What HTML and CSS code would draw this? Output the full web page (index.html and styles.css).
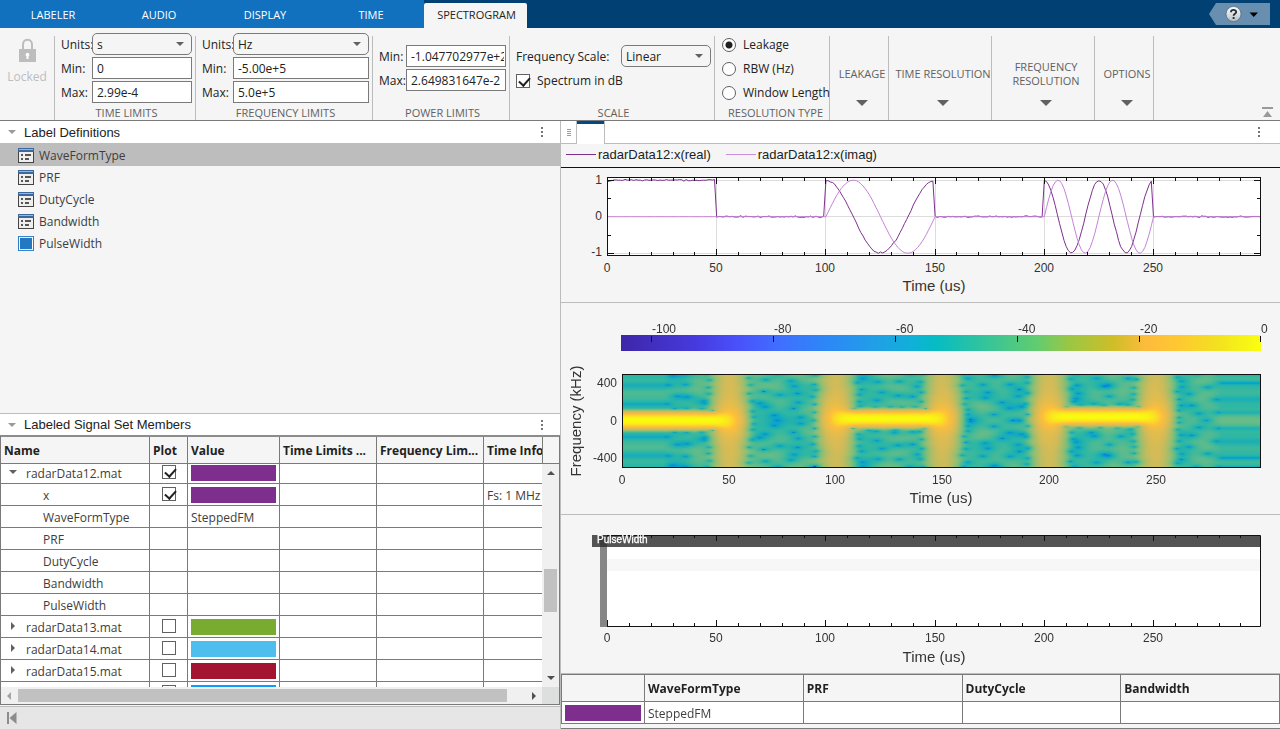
FILE: index.html
```html
<!DOCTYPE html>
<html lang="en">
<head>
<meta charset="utf-8">
<title>Signal Labeler</title>
<link rel="stylesheet" href="styles.css">
</head>
<body>
<header class="tabbar">
  <nav class="tabs">
    <button class="tab">LABELER</button>
    <button class="tab">AUDIO</button>
    <button class="tab">DISPLAY</button>
    <button class="tab">TIME</button>
    <button class="tab tab-active">SPECTROGRAM</button>
  </nav>
  <button class="help" aria-label="Help">
    <svg width="61" height="22" viewBox="0 0 61 22">
      <defs><linearGradient id="ball" x1="0" y1="0" x2="0" y2="1"><stop offset="0" stop-color="#fff"/><stop offset="1" stop-color="#b9c0c6"/></linearGradient></defs>
      <path d="M7 0H61V22H7L0 11Z" fill="#688faf"/>
      <circle cx="24.500" cy="11" r="7.500" fill="url(#ball)" stroke="#3c5870" stroke-width=".6"/>
      <path d="M22 9.200C22 6.200 27.200 6.200 27.200 9C27.200 10.800 24.600 10.800 24.600 12.800M24.600 14V16" fill="none" stroke="#26313a" stroke-width="1.900"/>
      <path d="M40.500 9.500H49L44.750 14Z" fill="#000"/>
    </svg>
  </button>
</header>

<div class="ribbon">
  <section class="sec lock-sec">
    <button class="lock" disabled>
      <svg width="17" height="25" viewBox="0 0 17 25"><path d="M4 12V6.500C4 .2 13 .2 13 6.500V12" fill="none" stroke="#bdbdbd" stroke-width="2"/><rect x="0" y="11" width="17" height="13" fill="#bdbdbd"/><path d="M8.500 15a1.700 1.700 0 0 1 1 3.200V21h-2v-2.800a1.700 1.700 0 0 1 1-3.200Z" fill="#fff"/></svg>
      <span>Locked</span>
    </button>
  </section>
  <section class="sec time-sec">
    <div class="fields">
      <label for="tu">Units:</label><span class="drop"><select id="tu"><option>s</option></select></span>
      <label for="tmin">Min:</label><input id="tmin" type="text" value="0">
      <label for="tmax">Max:</label><input id="tmax" type="text" value="2.99e-4">
    </div>
    <h2>TIME LIMITS</h2>
  </section>
  <section class="sec freq-sec">
    <div class="fields">
      <label for="fu">Units:</label><span class="drop"><select id="fu"><option>Hz</option></select></span>
      <label for="fmin">Min:</label><input id="fmin" type="text" value="-5.00e+5">
      <label for="fmax">Max:</label><input id="fmax" type="text" value="5.0e+5">
    </div>
    <h2>FREQUENCY LIMITS</h2>
  </section>
  <section class="sec power-sec">
    <div class="fields">
      <label for="pmin">Min:</label><input id="pmin" type="text" value="-1.047702977e+2">
      <label for="pmax">Max:</label><input id="pmax" type="text" value="2.649831647e-2">
    </div>
    <h2>POWER LIMITS</h2>
  </section>
  <section class="sec scale-sec">
    <div class="scale">
      <div class="scale-row"><label for="fs">Frequency Scale:</label><span class="drop"><select id="fs"><option>Linear</option></select></span></div>
      <label class="check-row"><input type="checkbox" checked>Spectrum in dB</label>
    </div>
    <h2>SCALE</h2>
  </section>
  <section class="sec res-sec">
    <div class="radios">
      <label><input type="radio" name="res" checked>Leakage</label>
      <label><input type="radio" name="res">RBW (Hz)</label>
      <label><input type="radio" name="res">Window Length</label>
    </div>
    <h2>RESOLUTION TYPE</h2>
  </section>
  <section class="sec w59"><button class="more"><span>LEAKAGE</span></button></section>
  <section class="sec w103"><button class="more"><span>TIME RESOLUTION</span></button></section>
  <section class="sec w103"><button class="more"><span>FREQUENCY RESOLUTION</span></button></section>
  <section class="sec w59 last"><button class="more"><span>OPTIONS</span></button></section>
  <button class="collapse" aria-label="Minimize toolstrip"><svg width="12" height="11" viewBox="0 0 12 11"><path d="M0 0H11V2H0ZM1 10L5.500 4L10 10Z" fill="#9a9a9a"/></svg></button>
</div>

<main class="work">
  <div class="left">
    <div class="panel-head"><i class="tri"></i><h3>Label Definitions</h3><button class="dots" aria-label="Panel menu"></button></div>
    <ul class="defs">
      <li class="selected"><svg class="form"><use href="#form"/></svg>WaveFormType</li>
      <li><svg class="form"><use href="#form"/></svg>PRF</li>
      <li><svg class="form"><use href="#form"/></svg>DutyCycle</li>
      <li><svg class="form"><use href="#form"/></svg>Bandwidth</li>
      <li><svg class="form" viewBox="0 0 16 16" preserveAspectRatio="none"><rect width="16" height="16" fill="#2a7dc6"/><rect x="1.500" y="1.500" width="13" height="13" fill="#2478c2" stroke="#fff"/></svg>PulseWidth</li>
    </ul>
    <div class="panel-head members"><i class="tri"></i><h3>Labeled Signal Set Members</h3><button class="dots" aria-label="Panel menu"></button></div>
    <div class="grid">
      <table class="tbl head">
        <colgroup><col class="c1"><col class="c2"><col class="c3"><col class="c4"><col class="c5"><col class="c6"><col></colgroup>
        <tr><th>Name</th><th>Plot</th><th>Value</th><th>Time Limits ...</th><th>Frequency Lim...</th><th>Time Info</th><th class="end"></th></tr>
      </table>
      <div class="scroller">
        <div class="clip">
          <table class="tbl rows">
            <colgroup><col class="c1"><col class="c2"><col class="c3"><col class="c4"><col class="c5"><col class="c6"></colgroup>
            <tr><td class="parent open">radarData12.mat</td><td><input type="checkbox" checked aria-label="Plot radarData12"></td><td><i class="sw purple"></i></td><td></td><td></td><td></td></tr>
            <tr><td class="child">x</td><td><input type="checkbox" checked aria-label="Plot x"></td><td><i class="sw purple"></i></td><td></td><td></td><td>Fs: 1 MHz</td></tr>
            <tr><td class="child">WaveFormType</td><td></td><td>SteppedFM</td><td></td><td></td><td></td></tr>
            <tr><td class="child">PRF</td><td></td><td></td><td></td><td></td><td></td></tr>
            <tr><td class="child">DutyCycle</td><td></td><td></td><td></td><td></td><td></td></tr>
            <tr><td class="child">Bandwidth</td><td></td><td></td><td></td><td></td><td></td></tr>
            <tr><td class="child">PulseWidth</td><td></td><td></td><td></td><td></td><td></td></tr>
            <tr><td class="parent">radarData13.mat</td><td><input type="checkbox" aria-label="Plot radarData13"></td><td><i class="sw green"></i></td><td></td><td></td><td></td></tr>
            <tr><td class="parent">radarData14.mat</td><td><input type="checkbox" aria-label="Plot radarData14"></td><td><i class="sw sky"></i></td><td></td><td></td><td></td></tr>
            <tr><td class="parent">radarData15.mat</td><td><input type="checkbox" aria-label="Plot radarData15"></td><td><i class="sw red"></i></td><td></td><td></td><td></td></tr>
            <tr><td></td><td><input type="checkbox" aria-label="Plot next member"></td><td><i class="sw blue"></i></td><td></td><td></td><td></td></tr>
          </table>
        </div>
        <div class="vbar"><i class="up"></i><i class="vthumb"></i><i class="down"></i></div>
      </div>
      <div class="hbar"><i class="lt"></i><span class="htrack"><i class="hthumb"></i></span><i class="rt"></i><i class="corner"></i></div>
    </div>
    <footer class="status"><button aria-label="Go to start"><svg width="10" height="12" viewBox="0 0 10 12"><path d="M0 0H2V12H0ZM9.500 0V12L2.500 6Z" fill="#8c8c8c"/></svg></button></footer>
  </div>

  <div class="right">
    <div class="docbar"><span class="grip"></span><span class="doctab"></span><button class="dots" aria-label="Plot menu"></button></div>
    <div class="legend"><span class="key real"></span>radarData12:x(real)<span class="key imag"></span>radarData12:x(imag)</div>
    <svg id="signal" class="chart" viewBox="0 0 719 134"></svg>
    <svg id="spectrogram" class="chart ruled" viewBox="0 0 719 211">
      <defs><linearGradient id="parula">
        <stop offset="0" stop-color="#3e26a8"/><stop offset=".12" stop-color="#463be0"/><stop offset=".18" stop-color="#4a50fa"/><stop offset=".25" stop-color="#3f70ff"/><stop offset=".33" stop-color="#2b8af5"/><stop offset=".4" stop-color="#20a0e6"/><stop offset=".455" stop-color="#10b0d8"/><stop offset=".49" stop-color="#05bcc4"/><stop offset=".57" stop-color="#35c49a"/><stop offset=".65" stop-color="#62cc70"/><stop offset=".7" stop-color="#9ac744"/><stop offset=".77" stop-color="#cfbe28"/><stop offset=".82" stop-color="#fdbb3c"/><stop offset=".87" stop-color="#fec832"/><stop offset=".93" stop-color="#f3e020"/><stop offset="1" stop-color="#faff10"/>
      </linearGradient></defs>
      <rect x="60" y="32" width="640" height="16" fill="url(#parula)"/>
      <foreignObject x="61" y="71" width="639" height="93"><canvas id="heat" class="heat" width="300" height="93"></canvas></foreignObject>
      <rect x="61.500" y="71.500" width="638" height="93" class="frame"/>
    </svg>
    <svg id="labels" class="chart ruled" viewBox="0 0 719 158">
      <rect x="46" y="20" width="654" height="92" fill="#fff"/>
      <rect x="46" y="44" width="653" height="12" fill="#f7f7f7"/>
      <rect x="39" y="32" width="7" height="80" fill="#868686"/>
      <rect x="31" y="20" width="668" height="12" fill="#545454"/>
      <rect x="39" y="20" width="7" height="12" fill="#3c3c3c"/>
    </svg>
    <table class="tbl summary">
      <tr><th></th><th>WaveFormType</th><th>PRF</th><th>DutyCycle</th><th>Bandwidth</th></tr>
      <tr><td><i class="sw purple"></i></td><td>SteppedFM</td><td></td><td></td><td></td></tr>
    </table>
  </div>
</main>

<svg class="sprite"><symbol id="form" viewBox="0 0 16 15">
  <rect x=".5" y=".5" width="15" height="14" fill="#eee" stroke="#444"/><rect width="16" height="4" fill="#3b679f"/><rect x="1" y="1" width="14" height="1" fill="#8db8ea"/>
  <path d="M3 6H5V8H3ZM7 6H13V8H7ZM3 10H5V12H3ZM7 10H11V12H7Z" fill="#555"/>
</symbol></svg>
<script src="plots.js"></script>
</body>
</html>
```
FILE: styles.css
```css
* { box-sizing: border-box; }
body {
  margin: 0; height: 100vh; display: flex; flex-direction: column; overflow: hidden;
  font: 12px/16px "Open Sans", "Noto Sans", sans-serif; color: #222; background: #f5f5f5;
}
h2, h3, ul { margin: 0; padding: 0; font-weight: normal; }
button { font: inherit; color: inherit; background: none; border: 0; padding: 0; margin: 0; }
svg { display: block; flex: none; }
.sprite { display: none; }

.tabbar { display: flex; justify-content: space-between; height: 28px; background: #004072; flex: none; }
.tabs { display: flex; align-items: flex-end; }
.tab { width: 106px; height: 28px; background: #1171be; color: #fff; font-size: 11px; padding-top: 2px; }
.tab-active { width: 103px; height: 25px; background: #f5f5f5; color: #222; border-radius: 2px 2px 0 0; padding: 0 0 1px 2px; }
.help { padding: 3px 10px 3px 0; }

.ribbon { display: flex; align-items: flex-end; height: 93px; border-bottom: 1px solid #7a7a7a; flex: none; }
.sec {
  flex: none; height: 84px; border-right: 1px solid #bcbcbc;
  display: flex; flex-direction: column; justify-content: flex-end; padding: 0 3px 0 6px;
}
.sec h2 { font-size: 11px; line-height: 15px; color: #616161; text-align: center; white-space: nowrap; }
.fields { display: grid; grid-template-columns: 31px 1fr; row-gap: 2px; align-items: center; margin-bottom: 2px; }
.fields label, .scale label { white-space: nowrap; padding-top: 1px; }
.fields input {
  width: 100%; height: 22px; border: 1px solid #7a7a7a; border-radius: 0; background: #fff;
  padding: 1px 1px 0 4px; font: inherit; color: #222; min-width: 0;
}
.drop { position: relative; display: block; }
.drop select {
  appearance: none; width: 100%; height: 22px; border: 1px solid #7a7a7a; border-radius: 5px;
  background: #f5f5f5; font: inherit; color: #222; padding: 1px 4px 0;
}
.drop::after {
  content: ""; position: absolute; right: 8px; top: 9px;
  border: 4px solid transparent; border-top-color: #616161; border-bottom: 0; pointer-events: none;
}
.lock-sec { width: 55px; padding: 0; justify-content: flex-start; }
.lock { display: flex; flex-direction: column; align-items: center; gap: 6px; padding-top: 2px; color: #bdbdbd; }
.time-sec { width: 141px; }
.freq-sec { width: 177px; }
.power-sec { width: 137px; padding-right: 3px; }
.power-sec .fields { grid-template-columns: 27px 1fr; margin-bottom: 14px; }
.scale-sec { width: 205px; }
.scale { display: grid; row-gap: 2px; margin-bottom: 14px; }
.scale-row { display: flex; justify-content: space-between; align-items: center; height: 22px; }
.scale-row .drop { width: 90px; }
.check-row { display: flex; align-items: center; gap: 7px; height: 22px; }
.res-sec { width: 115px; padding: 0 0 0 7px; }
.radios { display: grid; row-gap: 2px; margin-bottom: 2px; }
.radios label { display: flex; align-items: center; gap: 7px; height: 22px; padding-top: 1px; white-space: nowrap; }
.w59 { width: 59px; }
.w103 { width: 103px; }
.w59, .w103 { padding: 0; }
.more {
  height: 100%; color: #616161; font-size: 11px; line-height: 14px; text-align: center;
  display: flex; flex-direction: column; justify-content: flex-end; align-items: center; gap: 12px; padding: 0 0 14px 6px;
}
.more span { min-height: 28px; display: flex; align-items: center; }
.more::after { content: ""; border: 6px solid transparent; border-top-color: #616161; border-bottom: 0; }
.collapse { margin: 0 6px 2px auto; }

input[type="checkbox"], input[type="radio"] { appearance: none; margin: 0; flex: none; width: 14px; height: 14px; border: 1px solid #616161; background: #fff; position: relative; display: block; }
input[type="radio"] { border-radius: 50%; }
input[type="radio"]:checked { background: radial-gradient(circle, #222 3px, #fff 4px); }
input[type="checkbox"]:checked::after {
  content: ""; position: absolute; left: 2px; top: 2px; width: 9px; height: 5px;
  border: solid #222; border-width: 0 0 2px 2px; transform: rotate(-48deg);
}

.work { display: flex; flex: 1; min-height: 0; }
.left { width: 560px; display: flex; flex-direction: column; flex: none; }
.right { flex: 1; min-width: 0; border-left: 1px solid #bcbcbc; display: flex; flex-direction: column; }
.panel-head { display: flex; align-items: center; height: 22px; background: #fff; padding: 0 11px 0 8px; gap: 8px; flex: none; }
.panel-head h3 { flex: 1; font: 13px/22px "Liberation Sans", Arial, sans-serif; padding-top: 1px; }
.tri { border: 4px solid transparent; border-top-color: #9a9a9a; border-bottom: 0; }
.dots { width: 2px; height: 10px; margin: 0 6px; background: repeating-linear-gradient(#757575 0 2px, transparent 2px 4px); }
.defs { list-style: none; flex: 1; min-height: 0; }
.defs li { display: flex; align-items: center; gap: 5px; height: 22px; padding-left: 18px; color: #3d3d3d; }
.defs .selected { height: 23px; padding-top: 2px; background: #bdbdbd; }
.defs li + li { padding-top: 1px; }
.form { width: 16px; height: 15px; }
.members { border-top: 1px solid #bcbcbc; }

.tbl { border-collapse: separate; border-spacing: 0; table-layout: fixed; width: 100%; }
.tbl th { height: 27px; padding: 2px 3px 0; text-align: left; font-weight: bold; background: #f5f5f5; white-space: nowrap; overflow: hidden; }
.tbl th, .tbl td { border-right: 1px solid #7a7a7a; border-bottom: 1px solid #7a7a7a; }
.tbl td { height: 22px; padding: 2px 3px 0; line-height: 16px; color: #3d3d3d; background: #fff; white-space: nowrap; overflow: hidden; }
.tbl .end { border-right: 0; }
.c1 { width: 149px; } .c2 { width: 38px; } .c3 { width: 92px; } .c4 { width: 97px; } .c5 { width: 107px; } .c6 { width: 59px; }
.grid { border: 1px solid #7a7a7a; border-top: 2px solid #8c8c8c; margin-bottom: 1px; flex: none; }
.scroller { display: flex; height: 223px; overflow: hidden; }
.clip { width: 541px; overflow: hidden; }
.rows { margin-top: -2px; width: 542px; }
.rows input { margin: -3px auto 0; }
.rows .child { padding-left: 42px; }
.rows .parent { padding-left: 9px; }
.parent::before { content: ""; display: inline-block; border: 4px solid transparent; border-left-color: #616161; border-right: 0; margin: 0 11px 0 1px; vertical-align: 2px; }
.rows .open { padding-left: 8px; }
.open::before { border: 4px solid transparent; border-top-color: #616161; border-bottom: 0; margin: 0 9px 0 0; vertical-align: 4px; }
.sw { display: block; height: 16px; margin-top: -2px; }
.purple { background: #7e2f8e; } .green { background: #77ac30; } .sky { background: #4dbeee; } .red { background: #a2142f; } .blue { background: #1199ff; }
.vbar { flex: 1; background: #f0f0f0; display: flex; flex-direction: column; align-items: center; padding: 7px 0; }
.vbar i { border: 4px solid transparent; }
.vbar .up { border-bottom-color: #505050; border-top: 0; }
.vbar .down { border-top-color: #505050; border-bottom: 0; margin-top: auto; }
.vbar .vthumb { width: 13px; height: 43px; border: 0; background: #c1c1c1; margin-top: 94px; }
.hbar { display: flex; align-items: center; height: 17px; background: #f0f0f0; }
.hbar i { display: block; }
.lt, .rt { border: 4px solid transparent; }
.lt { border-right-color: #a3a3a3; border-left: 0; margin: 0 7px 0 6px; }
.rt { border-left-color: #505050; border-right: 0; margin: 0 6px 0 10px; }
.htrack { flex: 1; }
.hthumb { width: 97%; height: 13px; background: #c1c1c1; }
.corner { width: 17px; height: 17px; background: #dcdfde; }
.status { height: 23px; border-top: 1px solid #bcbcbc; background: #e6e6e6; padding: 5px 7px; flex: none; }

.docbar { height: 23px; display: flex; align-items: stretch; background: #fff; border-bottom: 1px solid #bcbcbc; flex: none; }
.docbar .dots { margin: 6px 20px 6px auto; }
.grip { width: 15px; background: repeating-linear-gradient(#9a9a9a 0 1px, #fff 1px 2px) center/4px 7px no-repeat; }
.doctab { width: 29px; border: solid #bcbcbc; border-width: 0 1px; background: #fff; box-shadow: inset 0 3px #004b87; margin-bottom: -1px; }
.legend { height: 24px; display: flex; align-items: center; padding: 0 5px 2px; font: 13px/20px "Liberation Sans", Arial, sans-serif; border-bottom: 1px solid #111; flex: none; color: #222; }
.key { width: 30px; height: 1px; margin-right: 2px; }
.real { background: #7e2f8e; } .imag { background: #cb8edd; margin-left: 15px; }
.chart { width: 100%; height: auto; font-family: "Liberation Sans", Arial, sans-serif; }
.ruled { border-top: 1px solid #bcbcbc; }
.heat { display: block; width: 100%; height: 100%; }
.chart text { font-size: 12px; fill: #333; }
.chart .axis-title { font-size: 15px; }
.chart .tag { font-size: 10px; fill: #fff; stroke: #fff; stroke-width: .3; }
.frame { fill: none; stroke: #111; }
.summary { border-top: 1px solid #7a7a7a; border-left: 1px solid #7a7a7a; box-shadow: 0 -1px #bcbcbc; margin-top: 1px; }
.summary th:first-child { width: 83px; }
.right::after { content: ""; flex: 1; background: #f5f5f5; border-bottom: 1px solid #7a7a7a; }
```
FILE: plots.js
```js
const NS = 'http://www.w3.org/2000/svg';
function add(svg, tag, attrs, text) {
  const el = document.createElementNS(NS, tag);
  for (const k in attrs) el.setAttribute(k, attrs[k]);
  if (text !== undefined) el.textContent = text;
  svg.appendChild(el);
}
const line = (svg, d, stroke, w = 1) => add(svg, 'path', { d, stroke, fill: 'none', 'stroke-width': w });

// Stepped FM pulse train sampled at 1 MHz with a little additive noise.
let seed = 12;
const rnd = () => (seed = (seed * 16807) % 2147483647) / 2147483647;
const N = 300, re = [], im = [];
for (let n = 0; n < N; n++) {
  const pulse = Math.floor(n / 100), on = n % 100 < 50;
  const ph = 2 * Math.PI * 0.02 * pulse * (n % 100);
  const noise = 0.011 * Math.sqrt(-2 * Math.log(rnd())) * Math.cos(2 * Math.PI * rnd());
  re.push((on ? Math.cos(ph) : 0) + noise);
  im.push(on ? Math.sin(ph) : 0);
}

function ticks(svg, x0, scale, top, bottom) {
  let d = '';
  for (let t = 0; t < 300; t += 10) {
    const x = Math.round(x0 + t * scale) + 0.5, len = t % 50 ? 3 : 6;
    d += `M${x} ${bottom}v${-len}M${x} ${top}v${len}`;
  }
  line(svg, d, '#111');
}
function xLabels(svg, x0, scale, y) {
  for (let t = 0; t <= 250; t += 50) add(svg, 'text', { x: Math.round(x0 + t * scale), y, 'text-anchor': 'middle' }, t);
}

const sig = document.getElementById('signal');
add(sig, 'rect', { x: 46, y: 9, width: 654, height: 79, fill: '#fff' });
const sx = 2.184;
let g = 'M46 12.500H699M46 48.500H699M46 85.500H699';
for (let t = 50; t < 300; t += 50) g += `M${Math.round(46 + t * sx) + 0.5} 9V87`;
line(sig, g, '#dcdcdc');
const trace = v => v.map((y, n) => `${n ? 'L' : 'M'}${(46.5 + n * sx).toFixed(1)} ${(48.7 - y * 36.5).toFixed(1)}`).join('');
line(sig, trace(re), '#7e2f8e');
line(sig, trace(im), '#c483d8');
add(sig, 'rect', { x: 46.5, y: 9.5, width: 653, height: 78, class: 'frame' });
ticks(sig, 46, sx, 10, 87);
line(sig, 'M47 12.500h6M47 85.500h6M47 30.500h3M47 67.500h3M699 12.500h-6M699 85.500h-6M699 30.500h-3M699 67.500h-3', '#111');
xLabels(sig, 46, sx, 104);
[[1, 16], [0, 52], [-1, 88]].forEach(([v, y]) => add(sig, 'text', { x: 41, y, 'text-anchor': 'end' }, v));
add(sig, 'text', { x: 373, y: 123, 'text-anchor': 'middle', class: 'axis-title' }, 'Time (us)');

const sp = document.getElementById('spectrogram');
for (let i = 0; i < 6; i++) {
  const x = 90 + i * 122;
  line(sp, `M${Math.min(x, 699) + 0.5} 33v6`, '#111');
  add(sp, 'text', { x: Math.min(x, 699) + 1, y: 30 }, -100 + i * 20);
}
[[400, 84], [0, 122], [-400, 159]].forEach(([v, y]) => add(sp, 'text', { x: 56, y, 'text-anchor': 'end' }, v));
xLabels(sp, 61, 2.134, 181);
add(sp, 'text', { x: 380, y: 200, 'text-anchor': 'middle', class: 'axis-title' }, 'Time (us)');
add(sp, 'text', { transform: 'translate(20 118) rotate(-90)', 'text-anchor': 'middle', class: 'axis-title' }, 'Frequency (kHz)');

// Short-time spectrum with a 38-sample Kaiser window, beta 20.
const bessel = x => { let s = 1, t = 1; for (let k = 1; k < 60; k++) { t *= (x / 2 / k) ** 2; s += t; } return s; };
const M = 38, win = [];
for (let k = 0; k < M; k++) win.push(bessel(20 * Math.sqrt(1 - ((2 * k) / (M - 1) - 1) ** 2)));
const sum = win.reduce((a, b) => a + b);
const map = [[53, 42, 135], [15, 92, 221], [20, 129, 214], [6, 164, 202], [46, 183, 164], [135, 191, 119], [209, 187, 89], [254, 190, 60], [249, 251, 14]];
const cv = document.getElementById('heat'), ctx = cv.getContext('2d'), H = cv.height;
const img = ctx.createImageData(N, H);
for (let c = 0; c < N; c++) {
  const s = Math.max(0, Math.min(N - M, c - M / 2));
  for (let r = 0; r < H; r++) {
    const f = 0.5 - (r + 0.5) / H;
    let a = 0, b = 0;
    for (let k = 0; k < M; k++) {
      const p = -2 * Math.PI * f * k, co = Math.cos(p), si = Math.sin(p), w = win[k] / sum;
      a += w * (re[s + k] * co - im[s + k] * si);
      b += w * (re[s + k] * si + im[s + k] * co);
    }
    const db = 10 * Math.log10(a * a + b * b + 1e-12);
    const u = Math.max(0, Math.min(0.9999, (db + 104.77) / 104.8)) * 8, i = Math.floor(u);
    for (let q = 0; q < 3; q++) img.data[(r * N + c) * 4 + q] = map[i][q] + (map[i + 1][q] - map[i][q]) * (u - i);
    img.data[(r * N + c) * 4 + 3] = 255;
  }
}
ctx.putImageData(img, 0, 0);

const lab = document.getElementById('labels');
line(lab, 'M46 20.500H699.500V111.500H46', '#111');
ticks(lab, 46, sx, 20, 111);
xLabels(lab, 46, sx, 127);
add(lab, 'text', { x: 36, y: 28, class: 'tag' }, 'PulseWidth');
add(lab, 'text', { x: 373, y: 147, 'text-anchor': 'middle', class: 'axis-title' }, 'Time (us)');
```
